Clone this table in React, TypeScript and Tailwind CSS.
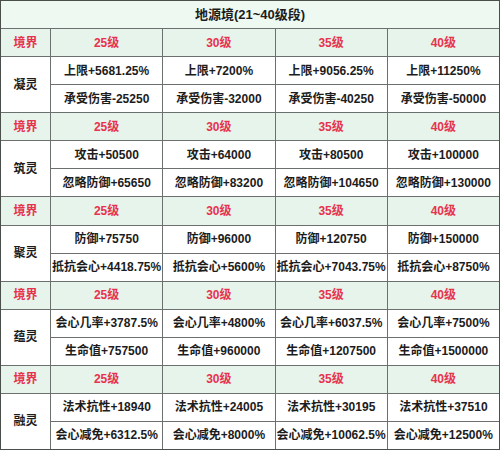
const levels = ["25级", "30级", "35级", "40级"];

const blocks = [
  {
    name: "凝灵",
    rows: [
      ["上限+5681.25%", "上限+7200%", "上限+9056.25%", "上限+11250%"],
      ["承受伤害-25250", "承受伤害-32000", "承受伤害-40250", "承受伤害-50000"],
    ],
  },
  {
    name: "筑灵",
    rows: [
      ["攻击+50500", "攻击+64000", "攻击+80500", "攻击+100000"],
      ["忽略防御+65650", "忽略防御+83200", "忽略防御+104650", "忽略防御+130000"],
    ],
  },
  {
    name: "聚灵",
    rows: [
      ["防御+75750", "防御+96000", "防御+120750", "防御+150000"],
      ["抵抗会心+4418.75%", "抵抗会心+5600%", "抵抗会心+7043.75%", "抵抗会心+8750%"],
    ],
  },
  {
    name: "蕴灵",
    rows: [
      ["会心几率+3787.5%", "会心几率+4800%", "会心几率+6037.5%", "会心几率+7500%"],
      ["生命值+757500", "生命值+960000", "生命值+1207500", "生命值+1500000"],
    ],
  },
  {
    name: "融灵",
    rows: [
      ["法术抗性+18940", "法术抗性+24005", "法术抗性+30195", "法术抗性+37510"],
      ["会心减免+6312.5%", "会心减免+8000%", "会心减免+10062.5%", "会心减免+12500%"],
    ],
  },
];

export default function App() {
  return (
    <div
      className="w-[500px] h-[450px] bg-white"
      style={{ fontFamily: '"Liberation Sans", "Noto Sans CJK SC", sans-serif' }}
    >
      <div className="grid h-full grid-cols-[49px_1fr_1fr_1fr_1fr] grid-rows-[repeat(16,1fr)] gap-px border border-[#4a4f4c] bg-[#6b6f6d] text-[12px] font-semibold text-[#1c1c1c]">
        <div className="col-span-5 flex items-center justify-center bg-[#eef9f2] text-[13px]">
          地源境(21~40级段)
        </div>
        {blocks.map((b) => (
          <Block key={b.name} name={b.name} rows={b.rows} />
        ))}
      </div>
    </div>
  );
}

function Block({ name, rows }: { name: string; rows: string[][] }) {
  return (
    <>
      <div className="flex items-center justify-center bg-[#e7f4ec] text-[#e6334c]">境界</div>
      {levels.map((l) => (
        <div key={l} className="flex items-center justify-center bg-[#e7f4ec] text-[#e6334c]">
          {l}
        </div>
      ))}
      <div className="row-span-2 flex items-center justify-center bg-white">{name}</div>
      {rows.map((r) =>
        r.map((c) => (
          <div key={c} className="flex items-center justify-center whitespace-nowrap bg-white">
            {c}
          </div>
        ))
      )}
    </>
  );
}
